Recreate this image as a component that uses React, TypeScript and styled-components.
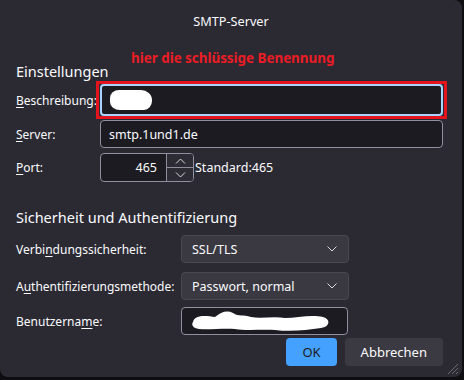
import styled, { createGlobalStyle } from "styled-components";

const GlobalStyle = createGlobalStyle`
  html, body {
    margin: 0;
    padding: 0;
    background: #0e0e10;
  }
  body {
    font-family: "Noto Sans", "Open Sans", sans-serif;
    color: #fbfbfe;
  }
`

const Window = styled.div`
  position: relative;
  box-sizing: border-box;
  width: 462px;
  height: 377px;
  padding: 0 19px 0 16px;
  background: #2b2a33;
  border-radius: 0 8px 8px 8px;
  font-size: 12px;
`

const Title = styled.div`
  height: 42px;
  line-height: 42px;
  text-align: center;
  font-size: 12.7px;
  margin-left: -16px;
  margin-right: -19px;
`

const Note = styled.div`
  position: absolute;
  top: 49px;
  left: 131px;
  color: #ec1c24;
  font-weight: 700;
  font-size: 13.4px;
  line-height: 18px;
`

const Heading = styled.h2<{ $top: number }>`
  margin: ${p => p.$top}px 0 0;
  font-size: 14.5px;
  font-weight: 400;
  line-height: 18px;
`

const Form = styled.div<{ $label: number; $top: number }>`
  display: grid;
  grid-template-columns: ${p => p.$label}px 1fr;
  align-items: center;
  margin-top: ${p => p.$top}px;
`

const Label = styled.label<{ $mt?: number }>`
  white-space: nowrap;
  margin-top: ${p => p.$mt ?? 0}px;
  u {
    text-decoration-thickness: 1px;
    text-underline-offset: 2px;
  }
`

const TextBox = styled.div<{ $h: number; $focus?: boolean; $mt?: number; $w?: number }>`
  position: relative;
  box-sizing: border-box;
  display: flex;
  align-items: center;
  height: ${p => p.$h}px;
  width: ${p => (p.$w ? `${p.$w}px` : "auto")};
  margin-top: ${p => p.$mt ?? 0}px;
  padding: 0 8px;
  background: #1c1b22;
  border: ${p => (p.$focus ? "2px solid #a9d4ff" : "1px solid #8f8f9d")};
  border-radius: 4px;
  font-size: 12.5px;
  ${p =>
    p.$focus &&
    `&::after {
      content: "";
      position: absolute;
      top: -5px;
      bottom: -5px;
      left: -6px;
      right: -6px;
      border: 3px solid #e3141d;
      pointer-events: none;
    }`}
`

const Blob = styled.span<{ $w: number; $h: number }>`
  display: inline-block;
  width: ${p => p.$w}px;
  height: ${p => p.$h}px;
  background: #ffffff;
  border-radius: 9px 11px 8px 10px / 8px 10px 9px 8px;
`

const PortRow = styled.div`
  display: flex;
  align-items: center;
  margin-top: 5px;
`

const PortBox = styled.div`
  box-sizing: border-box;
  display: flex;
  width: 94px;
  height: 29px;
  background: #1c1b22;
  border: 1px solid #8f8f9d;
  border-radius: 4px;
  overflow: hidden;
`

const PortValue = styled.div`
  flex: 1;
  display: flex;
  align-items: center;
  justify-content: flex-end;
  padding-right: 9px;
  font-size: 12.5px;
`

const Spinner = styled.div`
  display: flex;
  flex-direction: column;
  width: 27px;
`

const SpinButton = styled.div`
  flex: 1;
  display: flex;
  align-items: center;
  justify-content: center;
  background: #2d2c34;
  border-left: 1px solid #8f8f9d;
  &:first-child {
    border-bottom: 1px solid #8f8f9d;
  }
`

const Hint = styled.span`
  margin-left: 1px;
  font-size: 12.5px;
`

const Select = styled.div<{ $mt?: number }>`
  box-sizing: border-box;
  display: flex;
  align-items: center;
  justify-content: space-between;
  width: 168px;
  height: 28px;
  margin-top: ${p => p.$mt ?? 0}px;
  padding: 0 11px 0 10px;
  background: #3a3942;
  border: 1px solid #4a4952;
  border-radius: 4px;
  font-size: 12.5px;
`

const Buttons = styled.div`
  display: flex;
  justify-content: flex-end;
  gap: 8px;
  margin-top: 3px;
`

const Button = styled.button<{ $primary?: boolean }>`
  height: 28px;
  padding: 0 16px;
  min-width: ${p => (p.$primary ? 50 : 98)}px;
  border: none;
  border-radius: 4px;
  font-family: inherit;
  font-size: 13px;
  background: ${p => (p.$primary ? "#45a1ff" : "#3b3a43")};
  color: ${p => (p.$primary ? "#1c1b22" : "#fbfbfe")};
`

const Grip = styled.svg`
  position: absolute;
  right: 3px;
  bottom: 2px;
`

const Chevron = ({ up }: { up?: boolean }) => (
  <svg width="11" height="6" viewBox="0 0 11 6">
    <path
      d={up ? "M1 5.5 L5.5 1 L10 5.5" : "M1 0.5 L5.5 5 L10 0.5"}
      fill="none"
      stroke="#d8d8de"
      strokeWidth="1"
    />
  </svg>
)

const SelectArrow = () => (
  <svg width="10" height="6" viewBox="0 0 10 6">
    <path d="M0.5 0.5 L5 5 L9.5 0.5" fill="none" stroke="#d8d8de" strokeWidth="1" />
  </svg>
)

// redacted user name, drawn as a scribble
const Scribble = () => (
  <svg width="146" height="26" viewBox="0 0 146 26" style={{ marginLeft: -3 }}>
    <path
      d="M6 14 C8 6 20 8 28 9 C34 4 40 2 46 5 C52 9 56 6 64 9 C74 11 86 8 98 10 C110 10 124 6 136 9 C144 11 143 19 134 20 C120 22 104 24 88 22 C76 21 60 23 48 21 C36 20 22 22 12 21 C6 20 4 17 6 14 Z"
      fill="#ffffff"
    />
  </svg>
)

export default function App() {
  return (
    <>
      <GlobalStyle />
      <Window>
        <Title>SMTP-Server</Title>
        <Note>hier die schlüssige Benennung</Note>

        <Heading $top={20}>Einstellungen</Heading>
        <Form $label={84} $top={4}>
          <Label><u>B</u>eschreibung:</Label>
          <TextBox $h={32} $focus>
            <Blob $w={42} $h={20} />
          </TextBox>

          <Label $mt={4}><u>S</u>erver:</Label>
          <TextBox $h={28} $mt={4}>smtp.1und1.de</TextBox>

          <Label $mt={5}><u>P</u>ort:</Label>
          <PortRow>
            <PortBox>
              <PortValue>465</PortValue>
              <Spinner>
                <SpinButton><Chevron up /></SpinButton>
                <SpinButton><Chevron /></SpinButton>
              </Spinner>
            </PortBox>
            <Hint>Standard:465</Hint>
          </PortRow>
        </Form>

        <Heading $top={26}>Sicherheit und Authentifizierung</Heading>
        <Form $label={165} $top={9}>
          <Label>Verbi<u>n</u>dungssicherheit:</Label>
          <Select>
            SSL/TLS
            <SelectArrow />
          </Select>

          <Label $mt={9}>A<u>u</u>thentifizierungsmethode:</Label>
          <Select $mt={9}>
            Passwort, normal
            <SelectArrow />
          </Select>

          <Label $mt={7}>Benutzerna<u>m</u>e:</Label>
          <TextBox $h={28} $mt={7} $w={167}>
            <Scribble />
          </TextBox>
        </Form>

        <Buttons>
          <Button $primary>OK</Button>
          <Button>Abbrechen</Button>
        </Buttons>

        <Grip width="13" height="13" viewBox="0 0 13 13">
          <path d="M12 2 L2 12 M12 6 L6 12 M12 10 L10 12" stroke="#6b6a73" strokeWidth="1" />
        </Grip>
      </Window>
    </>
  );
}
